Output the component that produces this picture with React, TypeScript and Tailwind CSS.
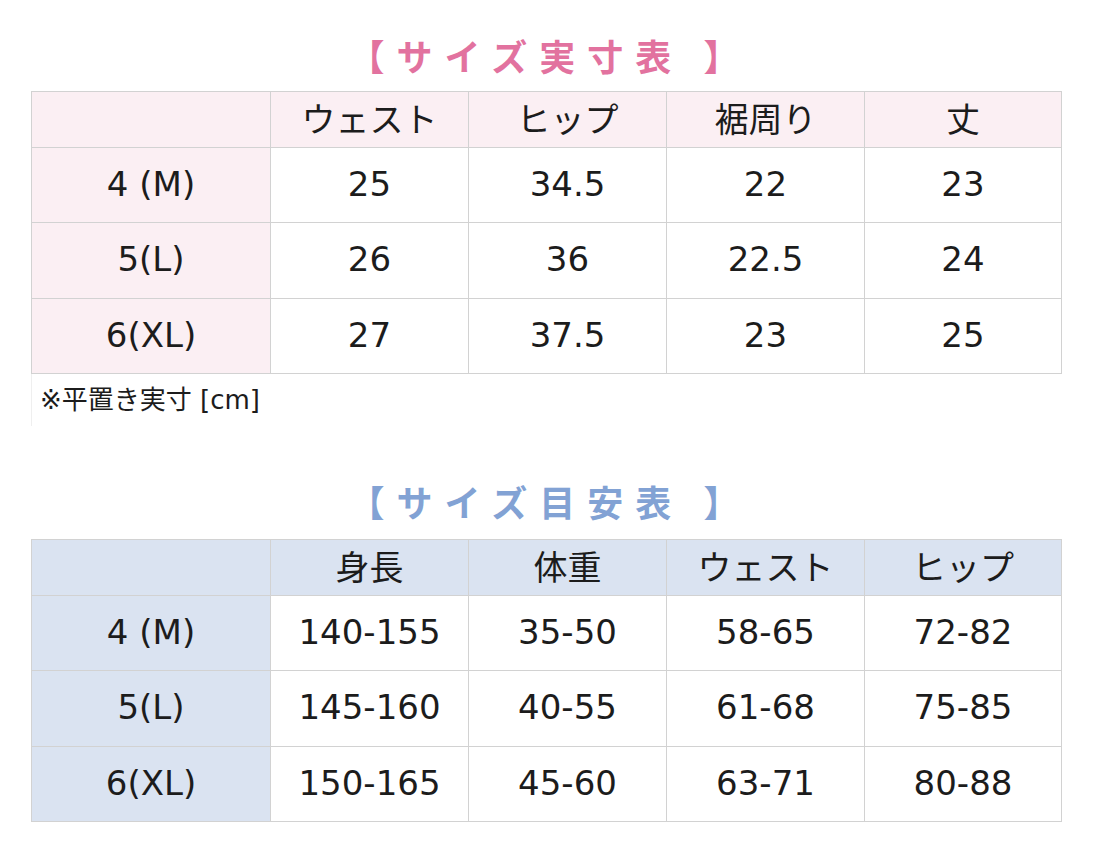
import React from 'react';

const font = { fontFamily: '"DejaVu Sans", "Noto Sans CJK JP", sans-serif' };

const actual = {
  head: ['ウェスト', 'ヒップ', '裾周り', '丈'],
  rows: [
    ['4 (M)', '25', '34.5', '22', '23'],
    ['5(L)', '26', '36', '22.5', '24'],
    ['6(XL)', '27', '37.5', '23', '25'],
  ],
};

const guide = {
  head: ['身長', '体重', 'ウェスト', 'ヒップ'],
  rows: [
    ['4 (M)', '140-155', '35-50', '58-65', '72-82'],
    ['5(L)', '145-160', '40-55', '61-68', '75-85'],
    ['6(XL)', '150-165', '45-60', '63-71', '80-88'],
  ],
};

const colWidths = ['w-[239px]', 'w-[198px]', 'w-[198px]', 'w-[198px]', 'w-[197px]'];
const rowHeights = ['h-[75px]', 'h-[76px]', 'h-[75px]'];

function Title({ text, color }: { text: string; color: string }) {
  return (
    <div
      className={`text-center text-[36px] font-bold leading-[36px] tracking-[12px] ${color}`}
      style={{ fontFamily: '"Noto Sans CJK JP", sans-serif' }}
    >
      {text}
    </div>
  );
}

function SizeTable({ data, fill }: { data: { head: string[]; rows: string[][] }; fill: string }) {
  return (
    <table className="ml-[31px] border-collapse text-[34px] text-[#1c1c1c]" style={font}>
      <thead>
        <tr className={`h-[56px] ${fill}`}>
          <th className={`${colWidths[0]} border border-[#d2d2d2] font-normal`} />
          {data.head.map((h, i) => (
            <th key={h} className={`${colWidths[i + 1]} border border-[#d2d2d2] font-normal leading-none`}>
              {h}
            </th>
          ))}
        </tr>
      </thead>
      <tbody>
        {data.rows.map((row, r) => (
          <tr key={row[0]} className={rowHeights[r]}>
            {row.map((cell, c) => (
              <td
                key={c}
                className={`border border-[#d2d2d2] text-center leading-none pb-[3px] ${c === 0 ? fill : 'bg-white'}`}
              >
                {cell}
              </td>
            ))}
          </tr>
        ))}
      </tbody>
    </table>
  );
}

export default function App() {
  return (
    <div className="w-[1100px] h-[850px] bg-white overflow-hidden">
      <div className="pt-[37px] pb-[18px]">
        <Title text="【サイズ実寸表 】" color="text-[#e2729f]" />
      </div>
      <SizeTable data={actual} fill="bg-[#fbeff3]" />
      <div className="ml-[31px] h-[52px] border-l border-[#efefef] flex items-center pl-[8px] text-[26px] text-[#1c1c1c]" style={font}>
        ※平置き実寸 [cm]
      </div>
      <div className="pt-[57px] pb-[20px]">
        <Title text="【サイズ目安表 】" color="text-[#82a2d4]" />
      </div>
      <SizeTable data={guide} fill="bg-[#dae3f1]" />
    </div>
  );
}
